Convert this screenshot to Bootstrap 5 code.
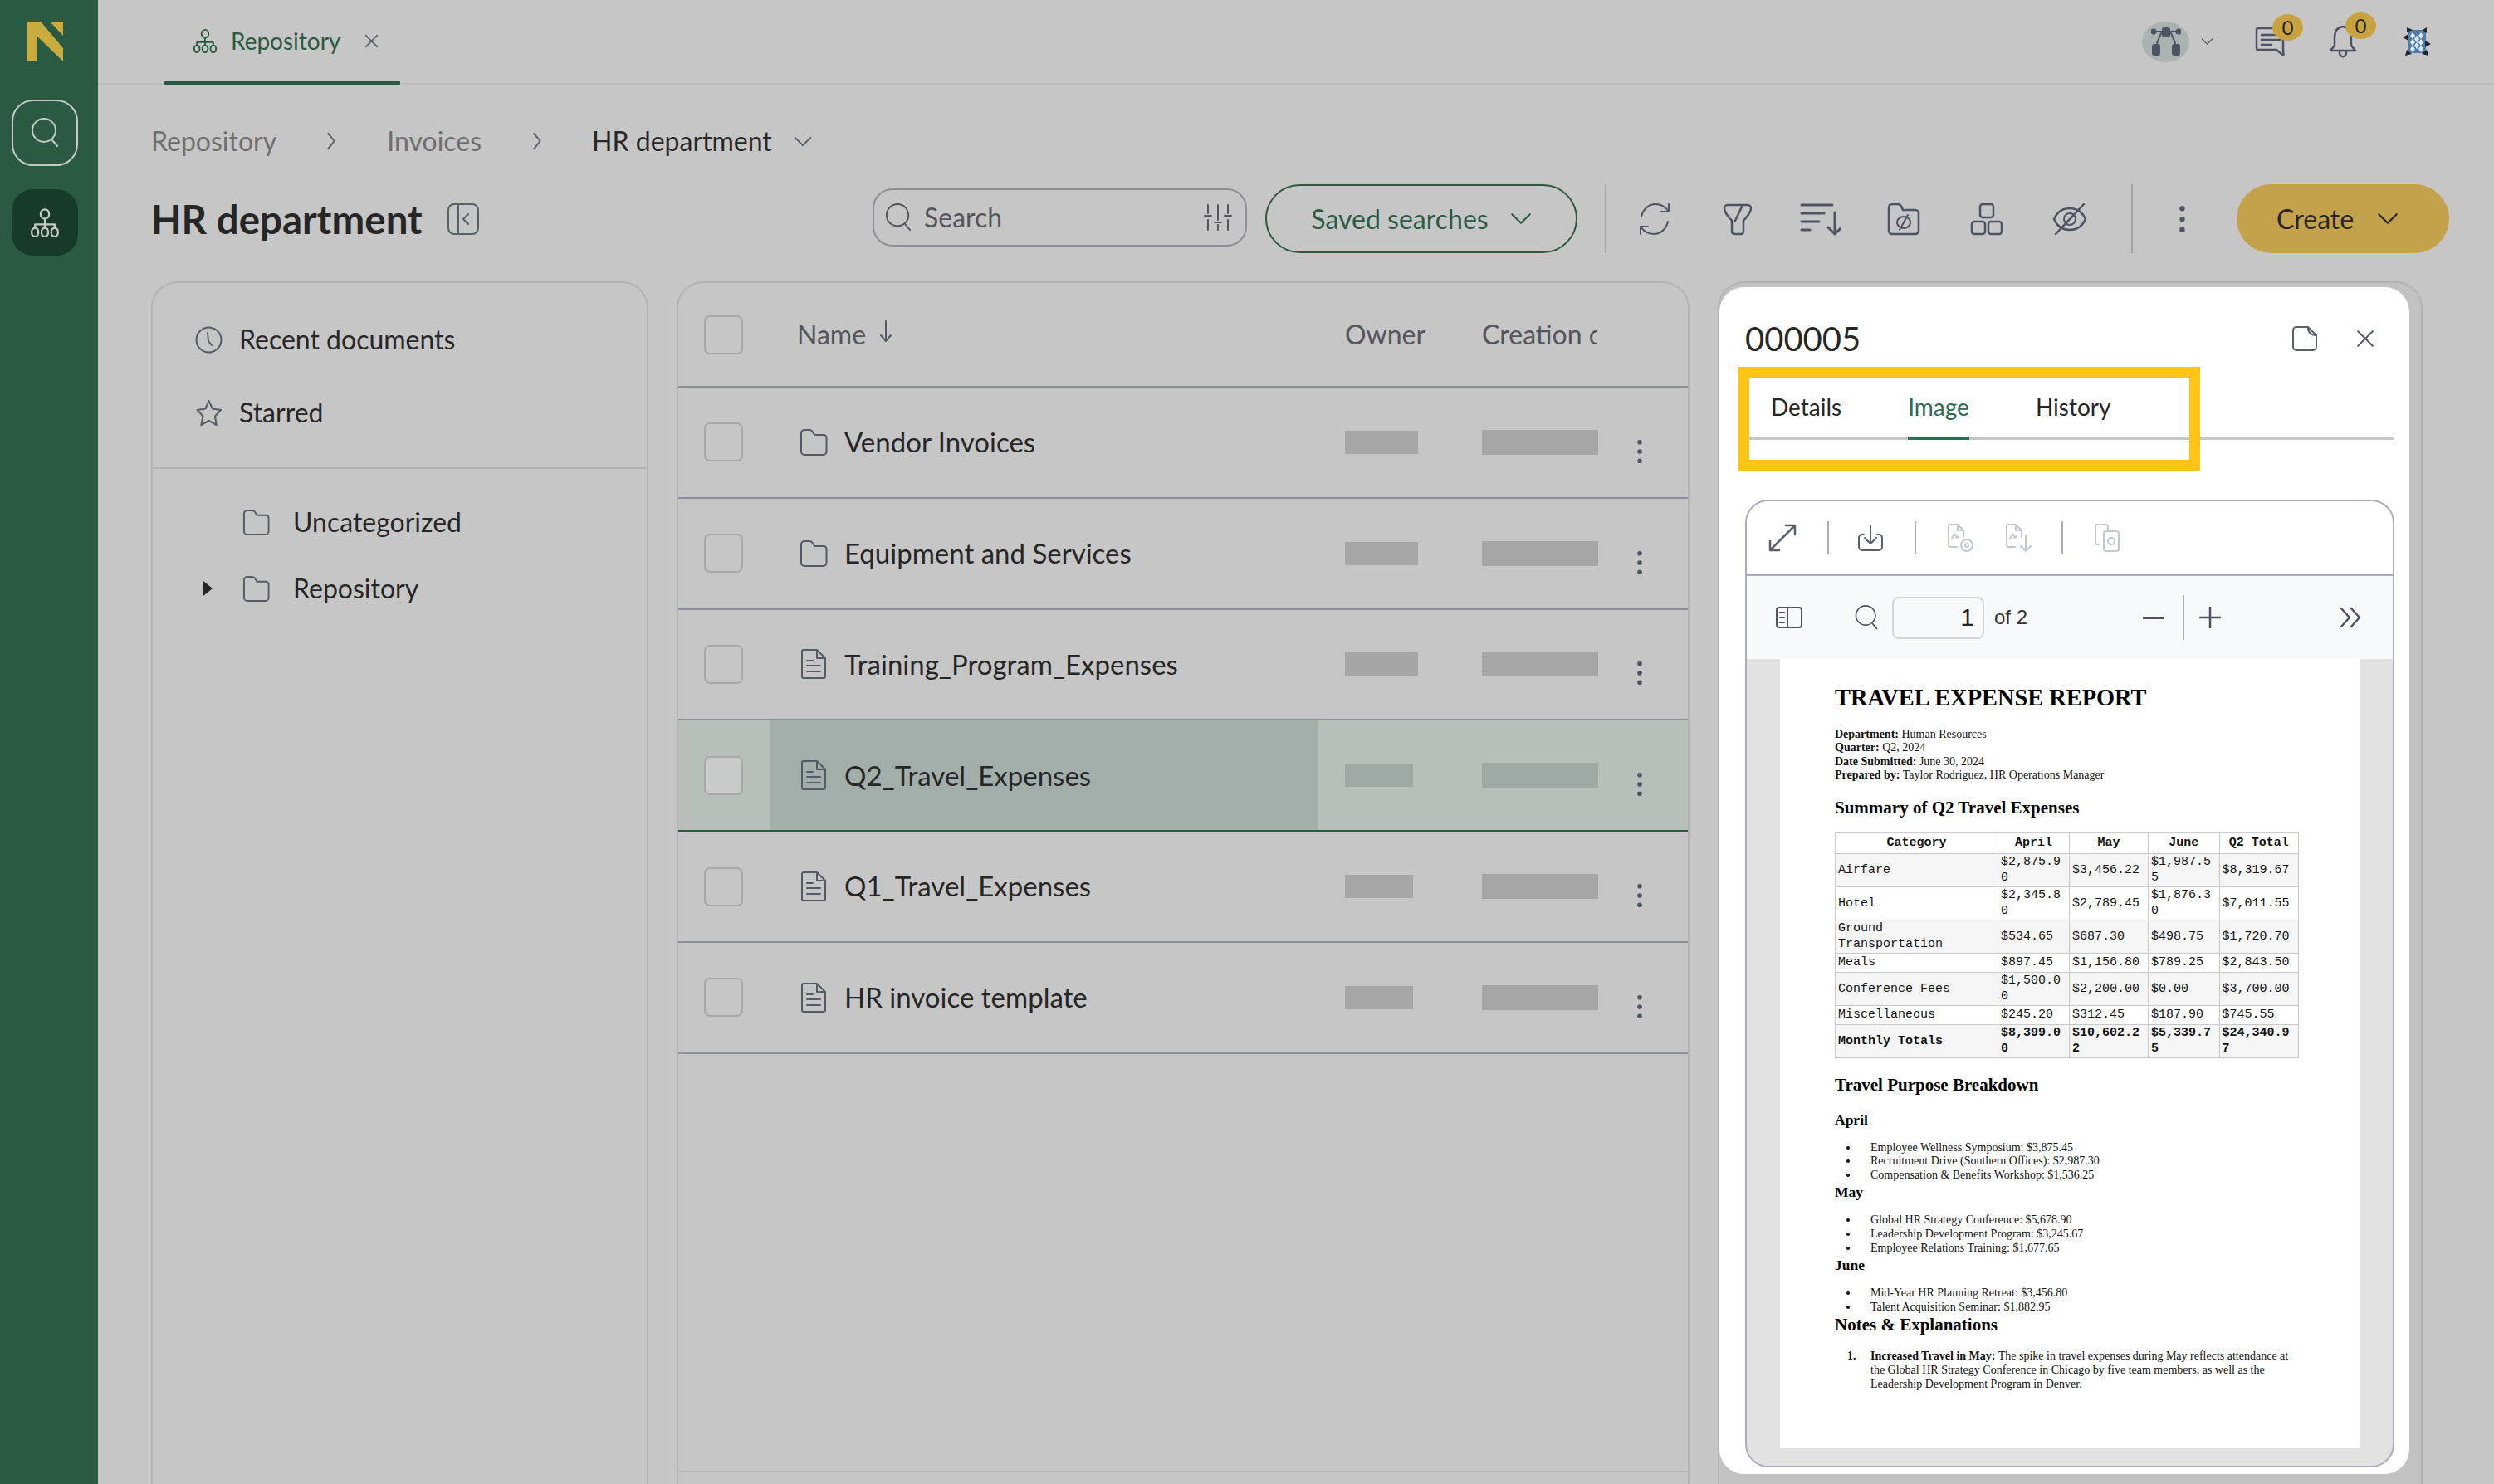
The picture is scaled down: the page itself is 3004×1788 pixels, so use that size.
<!DOCTYPE html>
<html lang="en">
<head>
<meta charset="UTF-8">
<title>HR department</title>
<link href="https://cdn.jsdelivr.net/npm/bootstrap@5.3.0/dist/css/bootstrap.min.css" rel="stylesheet">
<style>
body { width: 3004px; height: 1788px; overflow: hidden; background: #c6c6c6; font-family: Lato, "Liberation Sans", sans-serif; color: #262626; }
svg { display: block; fill: none; stroke: currentColor; stroke-width: 2; stroke-linecap: round; stroke-linejoin: round; }

.side-rail { width: 118px; background: #2a5a41; padding: 26px 0 0 14px; }
.rail-logo { width: 44px; height: 48px; margin: 0 0 46px 18px; }
.rail-logo svg { fill: #c9ab3e; stroke: none; width: 44px; height: 48px; }
.rail-btn { width: 80px; height: 80px; border-radius: 26px; color: #c6cac3; margin-bottom: 28px; }
.rail-search { border: 2px solid #c6cac3; }
.rail-active { background: #173a2a; }

.top-bar { height: 102px; border-bottom: 2px solid #bcbcbc; padding-left: 80px; padding-right: 74px; }
.top-tab { width: 284px; height: 102px; border-bottom: 4px solid #2a5a41; margin-bottom: -2px; color: #2a5a41; font-size: 28px; padding-left: 34px; gap: 16px; }
.top-tab .tab-x { color: #5a5f6e; margin-left: 13px; }
.avatar-blob { width: 57px; height: 49px; border-radius: 50%; background: #a9b4b0; color: #4e5364; }
.bar-ico { color: #4e5364; position: relative; }
.bar-chev { margin-left: 14px; }
.bar-chat { margin-left: 50px; }
.bar-bell { margin-left: 52px; }
.bar-grid { margin-left: 52px; }
.count-dot { position: absolute; top: -15px; right: -22px; width: 37px; height: 32px; border-radius: 50%; background: #c8a23f; color: #262626; font-size: 24px; line-height: 32px; text-align: center; }

.crumb-row { height: 120px; padding-left: 64px; font-size: 32px; padding-top: 16px; }
.crumb-row .crumb-off { color: #6e6e6e; }
.crumb-row svg { color: #555a68; }
.crumb-sep-a { margin: 0 61px 0 60px; }
.crumb-sep-b { margin: 0 60px 0 61px; }
.crumb-sep-c { margin-left: 25px; }

.head-row { height: 83px; padding-left: 64px; padding-right: 54px; }
.head-title { font-size: 47.5px; font-weight: 700; margin: 0; line-height: 1; color: #262626; }
.head-fold { margin-left: 29px; color: #5a5f6e; }
.head-search { width: 451px; height: 70px; border: 2px solid #8e8e98; border-radius: 24px; padding: 0 16px 0 12px; color: #55565c; margin-bottom: 4px; }
.head-search .form-control { background: transparent; border: 0; box-shadow: none; font-size: 32px; padding: 0 0 0 14px; color: #55565c; font-family: inherit; }
.head-search .form-control::placeholder { color: #55565c; opacity: 1; }
.btn-saved { width: 376px; height: 83px; border: 2px solid #2a5a41; border-radius: 42px; color: #2a5a41; font-size: 32px; margin-left: 22px; background: transparent; gap: 26px; }
.v-rule { width: 2px; height: 83px; background: #a3a3a8; }
.rule-head { margin-left: 33px; }
.tool-cell { width: 100px; color: #4e5364; }
.more-tool { width: 118px; margin-right: 7px; }
.btn-create { width: 256px; height: 83px; border-radius: 42px; background: #c4a14b; color: #262626; font-size: 32px; border: 0; gap: 28px; padding-left: 48px; }

.panel-row { gap: 34px; padding-left: 64px; margin-top: 34px; min-height: 0; }
.tree-panel { width: 599px; border: 2px solid #b3b3b3; border-bottom: 0; border-radius: 32px 32px 0 0; }
.tree-top { height: 224px; border-bottom: 2px solid #b3b3b3; padding: 24px 0 0 51px; }
.tree-item { height: 88px; font-size: 32px; gap: 20px; color: #262626; }
.tree-item svg { color: #555a68; }
.tree-sub { padding-top: 24px; }
.tree-sub .tree-item { height: 80px; padding-left: 107px; gap: 27px; position: relative; }
.tree-caret { position: absolute; left: 61px; top: 31px; width: 0; height: 0; border-left: 11px solid #262626; border-top: 9px solid transparent; border-bottom: 9px solid transparent; }

.list-panel { width: 1220px; border: 2px solid #b3b3b3; border-bottom: 0; border-radius: 32px 32px 0 0; }
.list-grid { display: grid; grid-template-columns: 111px 660px 197px 140px 1fr; align-items: center; }
.list-head { height: 126px; border-bottom: 2px solid #8d8e9b; font-size: 32px; color: #55565c; }
.list-line { height: 133.8px; border-bottom: 2px solid #8d8e9b; font-size: 33px; color: #262626; }
.list-body { flex: 1 1 auto; border-bottom: 2px solid #b3b3b3; margin-bottom: 14px; }
.box-cell { padding-left: 31px; }
.box-cell .form-check-input { width: 47px; height: 47px; margin: 0; border: 2px solid #a8a8a8; border-radius: 7px; background-color: transparent; display: block; }
.name-cell { height: 100%; padding-left: 35px; gap: 20px; }
.name-cell svg { color: #555a68; }
.name-head { gap: 16px; padding-left: 32px; }
.name-head svg { margin-bottom: 8px; }
.owner-cell { padding-left: 32px; }
.date-clip { width: 138px; overflow: hidden; white-space: nowrap; }
.mask-a { width: 88px; height: 28px; background: #a6a6a6; }
.mask-b { width: 140px; height: 30px; background: #a6a6a6; }
.mask-short { width: 82px; }
.more-cell { padding-left: 46px; padding-top: 22px; color: #4e5364; }
.line-picked { background: #b6bfba; border-bottom-color: #2a5a41; }
.line-picked .name-cell { background: #a2aeaa; }
.line-picked .form-check-input { background-color: #c8cbc9; }
.line-picked .mask-a, .line-picked .mask-b { background: #9ea9a5; }

.detail-shell { width: 849px; border: 2px solid #b3b3b3; border-bottom: 0; border-radius: 32px 32px 0 0; padding: 5px 14px 0 0; background: #c2c2c2; }
.detail-card { background: #fff; height: 1430px; border-radius: 30px; padding: 0 18px 0 31px; position: relative; }
.detail-top { height: 124px; }
.detail-id { font-size: 40px; font-weight: 400; margin: 0; color: #262626; }
.detail-top svg { color: #5a5f6e; }
.detail-x { margin-left: 46px; margin-right: 24px; }
.detail-tabs { height: 60px; border-bottom: 4px solid #c5c5c5; padding-left: 31px; gap: 80px; font-size: 28px; flex-wrap: nowrap; }
.detail-tabs .nav-link { padding: 0; color: #262626; height: 60px; line-height: 40px; }
.detail-tabs .nav-link.active { color: #2e6b52; border-bottom: 4px solid #2e6b52; }
.mark-frame { position: absolute; left: 23px; top: 96px; width: 556px; height: 125px; border: 13px solid #ffc515; pointer-events: none; }

.pdf-box { margin-top: 72px; height: 1166px; border: 2px solid #a9acc0; border-radius: 28px; overflow: hidden; background: #e2e2e2; }
.pdf-tools { height: 90px; background: #fff; border-bottom: 2px solid #a9acc0; color: #5a5f6e; padding-left: 25px; }
.pdf-tools i { display: block; width: 2px; height: 40px; background: #a9acc0; }
.pdf-dim { color: #c3c6d0; }
.rule-a { margin-left: 36px; }
.tool-dl { margin-left: 34px; }
.rule-b { margin-left: 37px; }
.tool-v { margin-left: 37px; }
.tool-w { margin-left: 38px; }
.rule-c { margin-left: 36px; }
.tool-z { margin-left: 37px; }
.pdf-nav { height: 100px; background: #f8f9fa; color: #4e5364; padding-left: 35px; padding-right: 38px; font-family: "Liberation Sans", sans-serif; }
.pdf-page-no { width: 111px; height: 51px; border: 2px solid #d4d5d8; border-radius: 8px; text-align: right; padding-right: 10px; line-height: 46px; font-size: 30px; color: #222; margin-left: 16px; }
.pdf-of { font-size: 24px; color: #333; margin-left: 12px; }
.pdf-nav i { display: block; width: 2px; height: 54px; background: #a9acc0; }
.nav-find { margin-left: 62px; }
.nav-rule { margin-left: 22px; }
.nav-plus { margin-left: 18px; }
.nav-more { margin-left: 143px; }

.paper { width: 698px; height: 951px; margin-left: 40px; background: #fff; padding: 31px 75px 0 66px; font-family: "Liberation Serif", serif; color: #111; font-size: 14px; line-height: 16.4px; overflow: hidden; }
.paper h2 { font-size: 28.4px; line-height: 32px; font-weight: 700; margin: 0 0 20px; font-family: inherit; color: #000; }
.paper p { margin: 0; }
.paper h3 { font-size: 21px; line-height: 24px; font-weight: 700; margin: 0; font-family: inherit; color: #000; }
.paper h4 { font-size: 17.5px; line-height: 18px; font-weight: 700; margin: 0; font-family: inherit; color: #000; }
.paper ul, .paper ol { margin: 0; padding-left: 29px; }
.paper li { padding-left: 14px; line-height: 16.6px; }
.paper ol li::marker { font-weight: 700; }
.paper .h-summary { margin-top: 18px; }
.paper .h-purpose { margin-top: 21px; line-height: 22px; }
.paper .h-month { margin-top: 22px; margin-bottom: 17px; }
.paper .h-next { margin-top: 3px; margin-bottom: 17px; }
.paper .h-notes { margin-top: 1px; margin-bottom: 18px; }
.cost-table { table-layout: fixed; width: 558px; margin-top: 18px; border-collapse: collapse; font-family: "Liberation Mono", monospace; font-size: 15px; line-height: 19px; color: #111; }
.cost-table th, .cost-table td { border: 1px solid #c8c8c8; padding: .5px 3px; height: 23px; word-break: break-all; vertical-align: middle; font-weight: 400; }
.cost-table th { text-align: center; font-weight: 700; height: 25px; word-break: normal; }
.cost-table td:first-child { word-break: normal; }
.cost-table tr.shade td { background: #f5f5f5; }
.cost-table tr.sum td { font-weight: 700; }
.c-cat { width: 196px; } .c-apr { width: 86px; } .c-may { width: 95px; } .c-jun { width: 85.5px; } .c-tot { width: 95.5px; }
</style>
</head>
<body class="d-flex">

<svg width="0" height="0" class="position-absolute">
  <symbol id="i-org" viewBox="0 0 32 32"><rect x="11.5" y="2" width="9" height="10" rx="4.5"/><path d="M16 12v10M5.500 22v-4h21v4"/><rect x="2" y="22" width="7" height="9" rx="3.500"/><rect x="12.500" y="22" width="7" height="9" rx="3.500"/><rect x="23" y="22" width="7" height="9" rx="3.500"/></symbol>
  <symbol id="i-folder" viewBox="0 0 34 34"><path d="M2 6a4 4 0 0 1 4-4h6c2 0 3 .8 4 2.500L18 8h11a3.500 3.500 0 0 1 3.500 3.500V28a4 4 0 0 1-4 4H6a4 4 0 0 1-4-4z"/></symbol>
  <symbol id="i-doc" viewBox="0 0 32 36"><path d="M2 3a2 2 0 0 1 2-2h16l10 10v22a2 2 0 0 1-2 2H4a2 2 0 0 1-2-2zM20 1v10h10M8 14h7M8 20h16M8 27h16"/></symbol>
  <symbol id="i-search" viewBox="0 0 36 38"><circle cx="17" cy="16" r="14"/><path d="M27 28l6 7"/></symbol>
  <symbol id="i-chev" viewBox="0 0 24 14"><path d="M2 2l10 10L22 2"/></symbol>
  <symbol id="i-next" viewBox="0 0 12 24"><path d="M2 2l8 10-8 10"/></symbol>
  <symbol id="i-x" viewBox="0 0 20 20"><path d="M2 2l16 16M18 2L2 18"/></symbol>
  <symbol id="i-dots" viewBox="0 0 8 32"><circle cx="4" cy="4" r="3" fill="currentColor" stroke="none"/><circle cx="4" cy="16" r="3" fill="currentColor" stroke="none"/><circle cx="4" cy="28" r="3" fill="currentColor" stroke="none"/></symbol>
</svg>

<aside class="side-rail d-flex flex-column flex-shrink-0">
  <div class="rail-logo"><svg viewBox="0 0 44 48"><path d="M0 0h17l27 32v16L12 17v31H0z"/><path d="M28 0h16v17z"/></svg></div>
  <div class="rail-btn rail-search d-flex align-items-center justify-content-center"><svg width="36" height="38"><use href="#i-search"/></svg></div>
  <div class="rail-btn rail-active d-flex align-items-center justify-content-center"><svg width="36" height="36"><use href="#i-org"/></svg></div>
</aside>

<div class="flex-grow-1 d-flex flex-column">
  <header class="top-bar d-flex align-items-center justify-content-between">
    <div class="top-tab d-flex align-items-center">
      <svg width="30" height="30"><use href="#i-org"/></svg>
      <span>Repository</span>
      <svg class="tab-x" width="17" height="17"><use href="#i-x"/></svg>
    </div>
    <div class="d-flex align-items-center">
      <div class="avatar-blob d-flex align-items-center justify-content-center">
        <svg width="36" height="34" viewBox="0 0 36 34"><rect x="14" y="1" width="8" height="10" rx="2" fill="currentColor"/><rect x="2" y="21" width="8" height="12" rx="2" fill="currentColor"/><rect x="26" y="21" width="8" height="12" rx="2" fill="currentColor"/><path d="M14 5H5M22 5h9M12 7l-5 12M24 7l5 12"/><circle cx="3" cy="5" r="2.500" fill="currentColor"/><circle cx="33" cy="5" r="2.500" fill="currentColor"/></svg>
      </div>
      <svg class="bar-ico bar-chev" width="15" height="10"><use href="#i-chev"/></svg>
      <div class="bar-ico bar-chat">
        <svg width="36" height="36" viewBox="0 0 36 36"><path d="M4 2h28a2 2 0 0 1 2 2v22a2 2 0 0 1 0 1l.500 8L26 28H4a2 2 0 0 1-2-2V4a2 2 0 0 1 2-2zM8 10h18M8 16h22M8 22h12" stroke-width="2.500"/></svg>
        <span class="count-dot">0</span>
      </div>
      <div class="bar-ico bar-bell">
        <svg width="36" height="40" viewBox="0 0 36 40"><path d="M18 2c-7 1-10 6-10 13v10l-5 6h30l-5-6V15C28 8 25 3 18 2zM14 33c0 7 8 7 8 0" stroke-width="2.500"/></svg>
        <span class="count-dot">0</span>
      </div>
      <svg class="bar-grid" width="38" height="38" viewBox="0 0 38 38">
        <rect x="9" y="5" width="21" height="28" fill="#4d7ea8" stroke="none"/>
        <g fill="#dfe7ee" stroke="none"><path d="M14 8l3 4-3 4-3-4zM24 8l3 4-3 4-3-4zM14 16l3 4-3 4-3-4zM24 16l3 4-3 4-3-4zM14 24l3 4-3 4-3-4zM24 24l3 4-3 4-3-4zM19 12l3 4-3 4-3-4zM19 20l3 4-3 4-3-4z"/></g>
        <g fill="#20242c" stroke="none"><path d="M2 14l7-4v8zM36 22l-7-4v8zM7 2l7 3-7 3zM31 2v7l-5-4zM5 36l2-7 6 5zM33 36l-2-7-6 5z"/></g>
      </svg>
    </div>
  </header>

  <nav class="crumb-row d-flex align-items-center" aria-label="breadcrumb">
    <span class="crumb-off">Repository</span>
    <svg class="crumb-sep-a" width="12" height="22"><use href="#i-next"/></svg>
    <span class="crumb-off">Invoices</span>
    <svg class="crumb-sep-b" width="12" height="22"><use href="#i-next"/></svg>
    <span>HR department</span>
    <svg class="crumb-sep-c" width="24" height="13"><use href="#i-chev"/></svg>
  </nav>

  <div class="head-row d-flex align-items-center">
    <h1 class="head-title">HR department</h1>
    <svg class="head-fold" width="40" height="40" viewBox="0 0 40 40"><rect x="2" y="2" width="36" height="36" rx="7"/><path d="M14 2v36M26 14l-6 6 6 6"/></svg>
    <div class="head-search d-flex align-items-center ms-auto">
      <svg class="flex-shrink-0" width="34" height="36"><use href="#i-search"/></svg>
      <input class="form-control" type="text" placeholder="Search">
      <svg class="flex-shrink-0" width="34" height="34" viewBox="0 0 34 34"><path d="M5 2v10M5 20v12M17 2v18M17 26v6M29 2v10M29 20v12M1 15h8M13 23h8M25 15h8"/></svg>
    </div>
    <button class="btn btn-saved d-flex align-items-center justify-content-center" type="button">Saved searches <svg width="26" height="15"><use href="#i-chev"/></svg></button>
    <div class="v-rule rule-head"></div>
    <div class="d-flex align-items-center ms-2">
      <div class="tool-cell d-flex justify-content-center"><svg width="44" height="42" viewBox="0 0 44 42"><path d="M6 18C8 9 15 3 23 3c7 0 12 3 16 9M39 3v9h-9M38 24c-2 9-9 15-17 15-7 0-12-3-16-9M5 39v-9h9"/></svg></div>
      <div class="tool-cell d-flex justify-content-center"><svg width="38" height="40" viewBox="0 0 38 40"><path d="M3 7a4 4 0 0 1 4-4h24a4 4 0 0 1 4 4c0 6-6 11-9 15v13a3 3 0 0 1-3 3h-8a3 3 0 0 1-3-3V22C9 18 3 13 3 7zM25 3l-9 19" stroke-width="2.500"/></svg></div>
      <div class="tool-cell d-flex justify-content-center"><svg width="50" height="40" viewBox="0 0 50 40"><path d="M2 3h37M2 13h27M2 23h21M2 33h10M42 12v26M34 30l8 8 8-8" stroke-width="3"/></svg></div>
      <div class="tool-cell d-flex justify-content-center"><svg width="40" height="40" viewBox="0 0 40 40"><path d="M2 6a4 4 0 0 1 4-4h7c3 0 4 2 6 7h15a4 4 0 0 1 4 4v21a4 4 0 0 1-4 4H6a4 4 0 0 1-4-4z" stroke-width="2.500"/><ellipse cx="20" cy="24" rx="8" ry="7"/><path d="M25 15L15 33"/></svg></div>
      <div class="tool-cell d-flex justify-content-center"><svg width="40" height="40" viewBox="0 0 40 40"><rect x="12" y="2" width="16" height="16" rx="3" stroke-width="2.500"/><rect x="2" y="23" width="16" height="15" rx="3" stroke-width="2.500"/><rect x="22" y="23" width="16" height="15" rx="3" stroke-width="2.500"/></svg></div>
      <div class="tool-cell d-flex justify-content-center"><svg width="42" height="40" viewBox="0 0 42 40"><path d="M2 20C6 11 13 7 21 7s15 4 19 13c-4 9-11 13-19 13S6 29 2 20zM38 2L4 38" stroke-width="2.500"/><circle cx="21" cy="20" r="7"/></svg></div>
    </div>
    <div class="v-rule ms-4"></div>
    <div class="tool-cell more-tool d-flex justify-content-center"><svg width="9" height="34"><use href="#i-dots"/></svg></div>
    <button class="btn btn-create d-flex align-items-center" type="button">Create <svg width="26" height="15"><use href="#i-chev"/></svg></button>
  </div>

  <div class="panel-row d-flex flex-grow-1">
    <section class="tree-panel flex-shrink-0">
      <div class="tree-top">
        <div class="tree-item d-flex align-items-center"><svg width="33" height="33" viewBox="0 0 33 33"><circle cx="16.500" cy="16.500" r="15"/><path d="M15 8l1 10 4 5"/></svg>Recent documents</div>
        <div class="tree-item d-flex align-items-center"><svg width="33" height="33" viewBox="0 0 33 33"><path d="M16.500 2l4.500 9.500 10 1.500-7 7.500 1.700 10.500-9.200-5-9.200 5L9.500 20.500l-7-7.500 10-1.500z"/></svg>Starred</div>
      </div>
      <div class="tree-sub">
        <div class="tree-item d-flex align-items-center"><svg width="35" height="33"><use href="#i-folder"/></svg>Uncategorized</div>
        <div class="tree-item d-flex align-items-center"><span class="tree-caret"></span><svg width="35" height="33"><use href="#i-folder"/></svg>Repository</div>
      </div>
    </section>

    <section class="list-panel d-flex flex-column flex-shrink-0">
      <div class="list-grid list-head">
        <div class="box-cell"><input class="form-check-input" type="checkbox" aria-label="Select all"></div>
        <div class="d-flex align-items-center name-cell name-head">Name <svg width="16" height="28" viewBox="0 0 16 28"><path d="M8 2v24M2 19l6 7 6-7"/></svg></div>
        <div class="owner-cell">Owner</div>
        <div class="date-clip">Creation date</div>
        <div></div>
      </div>
      <div class="list-body">
        <div class="list-grid list-line">
          <div class="box-cell"><input class="form-check-input" type="checkbox" aria-label="Select"></div>
          <div class="d-flex align-items-center name-cell"><svg width="34" height="34"><use href="#i-folder"/></svg>Vendor Invoices</div>
          <div class="owner-cell"><div class="mask-a"></div></div><div class="mask-b"></div>
          <div class="more-cell"><svg width="8" height="30"><use href="#i-dots"/></svg></div>
        </div>
        <div class="list-grid list-line">
          <div class="box-cell"><input class="form-check-input" type="checkbox" aria-label="Select"></div>
          <div class="d-flex align-items-center name-cell"><svg width="34" height="34"><use href="#i-folder"/></svg>Equipment and Services</div>
          <div class="owner-cell"><div class="mask-a"></div></div><div class="mask-b"></div>
          <div class="more-cell"><svg width="8" height="30"><use href="#i-dots"/></svg></div>
        </div>
        <div class="list-grid list-line">
          <div class="box-cell"><input class="form-check-input" type="checkbox" aria-label="Select"></div>
          <div class="d-flex align-items-center name-cell"><svg width="34" height="36"><use href="#i-doc"/></svg>Training_Program_Expenses</div>
          <div class="owner-cell"><div class="mask-a"></div></div><div class="mask-b"></div>
          <div class="more-cell"><svg width="8" height="30"><use href="#i-dots"/></svg></div>
        </div>
        <div class="list-grid list-line line-picked">
          <div class="box-cell"><input class="form-check-input" type="checkbox" aria-label="Select"></div>
          <div class="d-flex align-items-center name-cell"><svg width="34" height="36"><use href="#i-doc"/></svg>Q2_Travel_Expenses</div>
          <div class="owner-cell"><div class="mask-a mask-short"></div></div><div class="mask-b"></div>
          <div class="more-cell"><svg width="8" height="30"><use href="#i-dots"/></svg></div>
        </div>
        <div class="list-grid list-line">
          <div class="box-cell"><input class="form-check-input" type="checkbox" aria-label="Select"></div>
          <div class="d-flex align-items-center name-cell"><svg width="34" height="36"><use href="#i-doc"/></svg>Q1_Travel_Expenses</div>
          <div class="owner-cell"><div class="mask-a mask-short"></div></div><div class="mask-b"></div>
          <div class="more-cell"><svg width="8" height="30"><use href="#i-dots"/></svg></div>
        </div>
        <div class="list-grid list-line">
          <div class="box-cell"><input class="form-check-input" type="checkbox" aria-label="Select"></div>
          <div class="d-flex align-items-center name-cell"><svg width="34" height="36"><use href="#i-doc"/></svg>HR invoice template</div>
          <div class="owner-cell"><div class="mask-a mask-short"></div></div><div class="mask-b"></div>
          <div class="more-cell"><svg width="8" height="30"><use href="#i-dots"/></svg></div>
        </div>
      </div>
    </section>

    <section class="detail-shell flex-shrink-0">
      <div class="detail-card">
        <div class="detail-top d-flex align-items-center">
          <h2 class="detail-id me-auto">000005</h2>
          <svg width="32" height="32" viewBox="0 0 32 32"><path d="M6 2h14l10 10v14a4 4 0 0 1-4 4H6a4 4 0 0 1-4-4V6a4 4 0 0 1 4-4zM20 2c0 7 3 10 10 10"/></svg>
          <svg class="detail-x" width="22" height="22"><use href="#i-x"/></svg>
        </div>
        <ul class="nav detail-tabs">
          <li class="nav-item"><a class="nav-link" href="#">Details</a></li>
          <li class="nav-item"><a class="nav-link active" href="#">Image</a></li>
          <li class="nav-item"><a class="nav-link" href="#">History</a></li>
        </ul>
        <div class="mark-frame"></div>

        <div class="pdf-box">
          <div class="pdf-tools d-flex align-items-center">
            <svg width="36" height="36" viewBox="0 0 36 36"><path d="M3 33L33 3M22 3h11v11M14 33H3V22" stroke-width="2.500"/></svg>
            <i class="rule-a"></i>
            <svg class="tool-dl" width="32" height="34" viewBox="0 0 32 34"><path d="M8 13H6a4 4 0 0 0-4 4v11a4 4 0 0 0 4 4h20a4 4 0 0 0 4-4V17a4 4 0 0 0-4-4h-2M16 2v22M9 17l7 7 7-7"/></svg>
            <i class="rule-b"></i>
            <svg class="pdf-dim tool-v" width="32" height="34" viewBox="0 0 32 34"><path d="M12 28H4a2 2 0 0 1-2-2V3a2 2 0 0 1 2-2h9l7 7v8M13 1v7h7M6 18l3-6 3 5 2-2"/><circle cx="24" cy="26" r="7"/><circle cx="24" cy="26" r="2"/></svg>
            <svg class="pdf-dim tool-w" width="32" height="34" viewBox="0 0 32 34"><path d="M12 28H4a2 2 0 0 1-2-2V3a2 2 0 0 1 2-2h9l7 7v8M13 1v7h7M6 18l3-6 3 5 2-2M25 14v19M19 27l6 6 6-6"/></svg>
            <i class="rule-c"></i>
            <svg class="pdf-dim tool-z" width="32" height="36" viewBox="0 0 32 36"><path d="M6 26H4a2 2 0 0 1-2-2V4a2 2 0 0 1 2-2h11a2 2 0 0 1 2 2v6"/><rect x="12" y="10" width="18" height="24" rx="3"/><circle cx="21" cy="22" r="4"/></svg>
          </div>
          <div class="pdf-nav d-flex align-items-center">
            <svg width="32" height="26" viewBox="0 0 32 26"><rect x="1" y="1" width="30" height="24" rx="3"/><path d="M14 1v24M5 7h5M5 13h5M5 19h5"/></svg>
            <svg class="nav-find" width="30" height="32"><use href="#i-search"/></svg>
            <div class="pdf-page-no">1</div>
            <span class="pdf-of">of 2</span>
            <svg class="ms-auto" width="26" height="3" viewBox="0 0 26 3"><path d="M1 1.500h24" stroke-width="3"/></svg>
            <i class="nav-rule"></i>
            <svg class="nav-plus" width="26" height="26" viewBox="0 0 26 26"><path d="M13 1v24M1 13h24" stroke-width="2.500"/></svg>
            <svg class="nav-more" width="26" height="26" viewBox="0 0 26 26"><path d="M2 2l10 11L2 24M14 2l10 11-10 11" stroke-width="2.500"/></svg>
          </div>
          <article class="paper">
            <h2>TRAVEL EXPENSE REPORT</h2>
            <p><b>Department:</b> Human Resources<br><b>Quarter:</b> Q2, 2024<br><b>Date Submitted:</b> June 30, 2024<br><b>Prepared by:</b> Taylor Rodriguez, HR Operations Manager</p>
            <h3 class="h-summary">Summary of Q2 Travel Expenses</h3>
            <table class="cost-table">
              <thead><tr><th class="c-cat">Category</th><th class="c-apr">April</th><th class="c-may">May</th><th class="c-jun">June</th><th class="c-tot">Q2 Total</th></tr></thead>
              <tbody>
                <tr class="shade"><td>Airfare</td><td>$2,875.90</td><td>$3,456.22</td><td>$1,987.55</td><td>$8,319.67</td></tr>
                <tr><td>Hotel</td><td>$2,345.80</td><td>$2,789.45</td><td>$1,876.30</td><td>$7,011.55</td></tr>
                <tr class="shade"><td>Ground<br>Transportation</td><td>$534.65</td><td>$687.30</td><td>$498.75</td><td>$1,720.70</td></tr>
                <tr><td>Meals</td><td>$897.45</td><td>$1,156.80</td><td>$789.25</td><td>$2,843.50</td></tr>
                <tr class="shade"><td>Conference Fees</td><td>$1,500.00</td><td>$2,200.00</td><td>$0.00</td><td>$3,700.00</td></tr>
                <tr><td>Miscellaneous</td><td>$245.20</td><td>$312.45</td><td>$187.90</td><td>$745.55</td></tr>
                <tr class="shade sum"><td>Monthly Totals</td><td>$8,399.00</td><td>$10,602.22</td><td>$5,339.75</td><td>$24,340.97</td></tr>
              </tbody>
            </table>
            <h3 class="h-purpose">Travel Purpose Breakdown</h3>
            <h4 class="h-month">April</h4>
            <ul><li>Employee Wellness Symposium: $3,875.45</li><li>Recruitment Drive (Southern Offices): $2,987.30</li><li>Compensation &amp; Benefits Workshop: $1,536.25</li></ul>
            <h4 class="h-next">May</h4>
            <ul><li>Global HR Strategy Conference: $5,678.90</li><li>Leadership Development Program: $3,245.67</li><li>Employee Relations Training: $1,677.65</li></ul>
            <h4 class="h-next">June</h4>
            <ul><li>Mid-Year HR Planning Retreat: $3,456.80</li><li>Talent Acquisition Seminar: $1,882.95</li></ul>
            <h3 class="h-notes">Notes &amp; Explanations</h3>
            <ol><li><b>Increased Travel in May:</b> The spike in travel expenses during May reflects attendance at the Global HR Strategy Conference in Chicago by five team members, as well as the Leadership Development Program in Denver.</li></ol>
          </article>
        </div>
      </div>
    </section>
  </div>
</div>

</body>
</html>
